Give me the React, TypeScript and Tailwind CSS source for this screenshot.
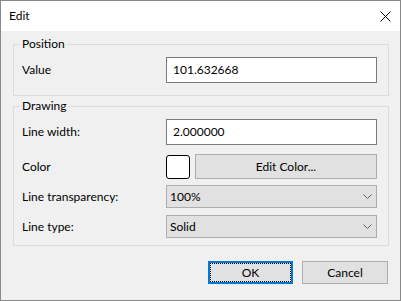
import { ReactNode } from 'react';

const FONT = { fontFamily: 'Lato, "Noto Sans", sans-serif' };

function Chevron() {
  return (
    <svg width="9" height="5" viewBox="0 0 9 5" className="shrink-0">
      <polyline points="0.5,0.5 4.5,4.5 8.5,0.5" fill="none" stroke="#606060" strokeWidth="1" />
    </svg>
  );
}

function Combo({ value }: { value: string }) {
  return (
    <div className="flex h-[23px] flex-1 items-center justify-between border border-[#adadad] bg-[#e1e1e1] pl-[3px] pr-[4px]">
      <span>{value}</span>
      <Chevron />
    </div>
  );
}

function TextBox({ value }: { value: string }) {
  return (
    <div className="flex h-[26px] flex-1 items-center border border-[#7a7a7a] bg-white pl-[6px]">
      {value}
    </div>
  );
}

function Row({ label, className, children }: { label: string; className?: string; children: ReactNode }) {
  return (
    <div className={`flex items-center ${className ?? ''}`}>
      <span className="w-[144px] shrink-0">{label}</span>
      {children}
    </div>
  );
}

function Group({ title, className, children }: { title: string; className?: string; children: ReactNode }) {
  return (
    <fieldset className={`border border-[#dcdcdc] pl-[8px] pr-[11px] ${className ?? ''}`}>
      <legend className="ml-[-2px] px-[2px] leading-[16px]">{title}</legend>
      {children}
    </fieldset>
  );
}

export default function App() {
  return (
    <div
      className="flex h-[301px] w-[401px] flex-col border border-[#888888] text-[12px] leading-[16px] text-black"
      style={FONT}
    >
      <div className="flex h-[30px] shrink-0 items-center justify-between bg-white pl-[8px] pr-[9px]">
        <span>Edit</span>
        <svg width="11" height="11" viewBox="0 0 11 11">
          <path d="M0.5 0.5 L10.5 10.5 M10.5 0.5 L0.5 10.5" stroke="#000" strokeWidth="1" />
        </svg>
      </div>

      <div className="flex flex-1 flex-col bg-[#f0f0f0] pl-[12px] pr-[11px] pt-[5px]">
        <Group title="Position" className="pb-[12px] pt-[5px]">
          <Row label="Value">
            <TextBox value="101.632668" />
          </Row>
        </Group>

        <Group title="Drawing" className="mt-[2px] pb-[7px] pt-[5px]">
          <Row label="Line width:">
            <TextBox value="2.000000" />
          </Row>
          <Row label="Color" className="mt-[9px]">
            <div className="flex flex-1 items-center gap-[5px]">
              <div className="h-[24px] w-[24px] rounded-[3px] border border-black bg-white" />
              <div className="flex h-[25px] flex-1 items-center justify-center border border-[#adadad] bg-[#e1e1e1]">
                Edit Color...
              </div>
            </div>
          </Row>
          <Row label="Line transparency:" className="mt-[6px]">
            <Combo value="100%" />
          </Row>
          <Row label="Line type:" className="mt-[7px]">
            <Combo value="Solid" />
          </Row>
        </Group>

        <div className="mr-[1px] mt-[15px] flex justify-end gap-[9px]">
          <div className="h-[23px] w-[85px] border-2 border-[#0078d7] bg-[#e1e1e1]">
            <div className="flex h-full w-full items-center justify-center border border-dotted border-black">OK</div>
          </div>
          <div className="flex h-[23px] w-[86px] items-center justify-center border border-[#adadad] bg-[#e1e1e1]">
            Cancel
          </div>
        </div>
      </div>
    </div>
  );
}
